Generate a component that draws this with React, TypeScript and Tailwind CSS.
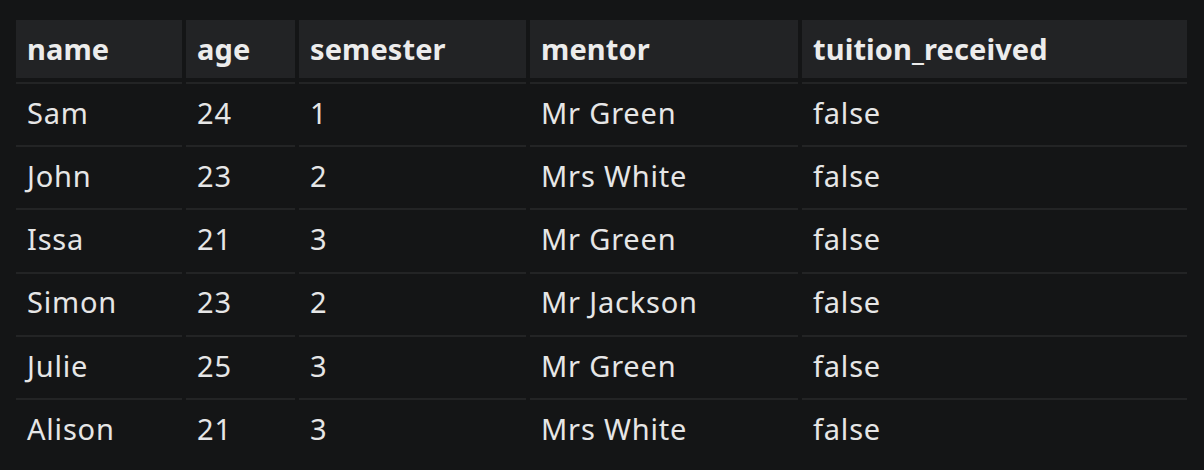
import React from 'react';

const columns = [
  { key: 'name', width: 'w-[166px]' },
  { key: 'age', width: 'w-[109px]' },
  { key: 'semester', width: 'w-[227px]' },
  { key: 'mentor', width: 'w-[268px]' },
  { key: 'tuition_received', width: 'w-[385px]' },
];

const students = [
  { name: 'Sam', age: 24, semester: 1, mentor: 'Mr Green', tuition_received: false },
  { name: 'John', age: 23, semester: 2, mentor: 'Mrs White', tuition_received: false },
  { name: 'Issa', age: 21, semester: 3, mentor: 'Mr Green', tuition_received: false },
  { name: 'Simon', age: 23, semester: 2, mentor: 'Mr Jackson', tuition_received: false },
  { name: 'Julie', age: 25, semester: 3, mentor: 'Mr Green', tuition_received: false },
  { name: 'Alison', age: 21, semester: 3, mentor: 'Mrs White', tuition_received: false },
];

const App: React.FC = () => {
  return (
    <div className="w-[1204px] h-[470px] bg-[#141516] pl-[12px] pt-[16px] font-['Noto_Sans',sans-serif] text-[#e6e6e6]">
      <table className="table-fixed border-separate border-spacing-[4px] text-[29px]">
        <thead>
          <tr>
            {columns.map((col) => (
              <th
                key={col.key}
                className={`${col.width} h-[58px] bg-[#222325] pl-[11px] pr-[12px] text-left font-bold tracking-[0.1px] text-[#ececec]`}
              >
                {col.key}
              </th>
            ))}
          </tr>
        </thead>
        <tbody>
          {students.map((s, i) => (
            <tr key={i}>
              {columns.map((col) => (
                <td
                  key={col.key}
                  className="h-[59.2px] border-t-2 border-[#232425] pl-[11px] pr-[12px] align-middle tracking-[0.8px]"
                >
                  {String(s[col.key as keyof typeof s])}
                </td>
              ))}
            </tr>
          ))}
        </tbody>
      </table>
    </div>
  );
};

export default App;
